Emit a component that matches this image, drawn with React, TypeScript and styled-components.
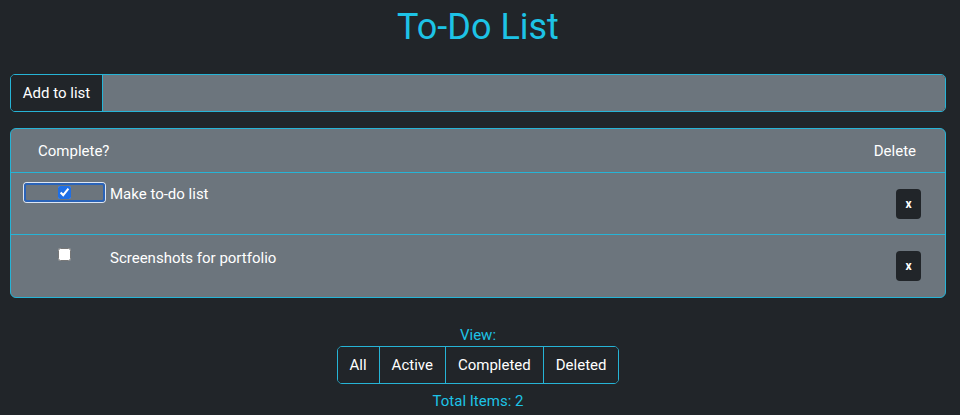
import React, { useState } from "react";
import styled, { createGlobalStyle } from "styled-components";

const CYAN = "#1dc3e6";
const EDGE = "#26b4d6";
const DARK = "#212529";
const GRAY = "#6c757d";

interface Todo {
  id: number;
  text: string;
  checked: boolean;
}

const GlobalStyle = createGlobalStyle`
  html, body {
    margin: 0;
    background: ${DARK};
    font-family: Roboto, "Liberation Sans", sans-serif;
    color: #fff;
  }
`;

const Page = styled.div`
  padding: 0 14px 0 10px;
`;

const Title = styled.h1`
  margin: 4px 0 0;
  text-align: center;
  font-size: 36px;
  font-weight: 400;
  line-height: 46px;
  color: ${CYAN};
`;

const InputGroup = styled.form`
  display: flex;
  margin-top: 24px;
  height: 38px;
  border: 1px solid ${EDGE};
  border-radius: 5px;
  overflow: hidden;
  box-sizing: border-box;
`;

const AddButton = styled.button`
  flex: none;
  width: 92px;
  background: ${DARK};
  color: #fff;
  border: 0;
  border-right: 1px solid ${EDGE};
  font: inherit;
  font-size: 15px;
  padding: 0;
`;

const TextInput = styled.input`
  flex: 1;
  background: ${GRAY};
  border: 0;
  outline: none;
  color: #fff;
  font: inherit;
  padding: 0 12px;
`;

const Table = styled.div`
  margin-top: 16px;
  border: 1px solid ${EDGE};
  border-radius: 6px;
  background: ${GRAY};
  overflow: hidden;
`;

const Row = styled.div<{ $head?: boolean }>`
  display: grid;
  grid-template-columns: 99px 1fr auto;
  height: ${({ $head }) => ($head ? 44 : 62)}px;
  box-sizing: border-box;
  border-bottom: 1px solid ${EDGE};
  font-size: 15px;
  &:last-child {
    border-bottom: 0;
  }
`;

const HeadCell = styled.div<{ $right?: boolean }>`
  display: flex;
  align-items: center;
  padding: ${({ $right }) => ($right ? "0 29px 0 0" : "0 0 0 27px")};
  white-space: nowrap;
`;

const CheckCell = styled.div`
  display: flex;
  justify-content: center;
  padding: 10px 5px 0 13px;
`;

const TextCell = styled.div<{ $lower?: boolean }>`
  padding-top: ${({ $lower }) => ($lower ? 11 : 9)}px;
  line-height: 24px;
`;

const ActionCell = styled.div`
  display: flex;
  align-items: center;
  padding-right: 24px;
`;

const CheckBox = styled.label<{ $focused?: boolean }>`
  display: flex;
  align-items: center;
  justify-content: center;
  width: 82px;
  height: 19px;
  box-sizing: border-box;
  border-radius: 3px;
  border: 2px solid ${({ $focused }) => ($focused ? "#2a63b8" : "transparent")};
  box-shadow: ${({ $focused }) => ($focused ? "0 0 0 1px #dde6f3" : "none")};
  input {
    margin: 0;
    width: 13px;
    height: 13px;
    accent-color: #1f6fe6;
  }
`;

const DeleteButton = styled.button`
  width: 25px;
  height: 30px;
  padding: 0;
  border: 0;
  border-radius: 4px;
  background: ${DARK};
  color: #fff;
  font-family: inherit;
  font-size: 12px;
  font-weight: 700;
`;

const Footer = styled.div`
  display: flex;
  flex-direction: column;
  align-items: center;
  margin-top: 27px;
  color: ${CYAN};
  font-size: 15px;
  line-height: 20px;
`;

const ViewGroup = styled.div`
  display: flex;
  margin-top: 1px;
  height: 38px;
  border: 1px solid ${EDGE};
  border-radius: 5px;
  overflow: hidden;
  box-sizing: border-box;
`;

const ViewButton = styled.button`
  background: ${DARK};
  color: #fff;
  border: 0;
  border-left: 1px solid ${EDGE};
  padding: 0 12px;
  font: inherit;
  font-size: 15px;
  &:first-child {
    border-left: 0;
  }
`;

const Total = styled.div`
  margin-top: 7px;
`;

const initial: Todo[] = [
  { id: 1, text: "Make to-do list", checked: true },
  { id: 2, text: "Screenshots for portfolio", checked: false },
];

const App: React.FC = () => {
  const [todos, setTodos] = useState<Todo[]>(initial);

  const toggle = (id: number) =>
    setTodos(todos.map((t) => (t.id === id ? { ...t, checked: !t.checked } : t)));

  return (
    <Page>
      <GlobalStyle />
      <Title>To-Do List</Title>
      <InputGroup onSubmit={(e) => e.preventDefault()}>
        <AddButton type="submit">Add to list</AddButton>
        <TextInput type="text" />
      </InputGroup>
      <Table>
        <Row $head>
          <HeadCell>Complete?</HeadCell>
          <div />
          <HeadCell $right>Delete</HeadCell>
        </Row>
        {todos.map((todo, i) => (
          <Row key={todo.id}>
            <CheckCell>
              <CheckBox $focused={i === 0}>
                <input
                  type="checkbox"
                  checked={todo.checked}
                  onChange={() => toggle(todo.id)}
                />
              </CheckBox>
            </CheckCell>
            <TextCell $lower={i > 0}>{todo.text}</TextCell>
            <ActionCell>
              <DeleteButton>x</DeleteButton>
            </ActionCell>
          </Row>
        ))}
      </Table>
      <Footer>
        <div>View:</div>
        <ViewGroup>
          <ViewButton>All</ViewButton>
          <ViewButton>Active</ViewButton>
          <ViewButton>Completed</ViewButton>
          <ViewButton>Deleted</ViewButton>
        </ViewGroup>
        <Total>Total Items: {todos.length}</Total>
      </Footer>
    </Page>
  );
};

export default App;
